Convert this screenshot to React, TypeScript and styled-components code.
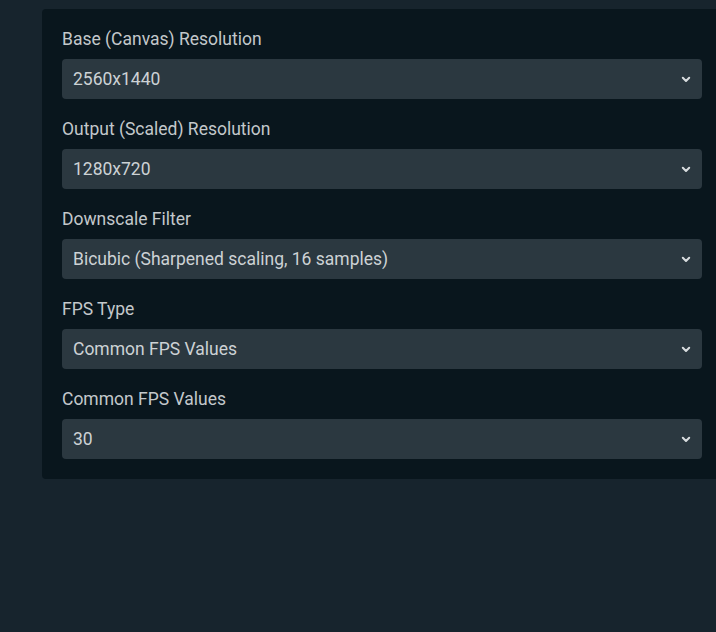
import React from "react";
import styled, { createGlobalStyle } from "styled-components";

const GlobalStyle = createGlobalStyle`
  html, body {
    margin: 0;
    padding: 0;
    background: #17242d;
    overflow: hidden;
  }
  body {
    font-family: Roboto, "Liberation Sans", sans-serif;
  }
`;

const Page = styled.div`
  width: 716px;
  height: 632px;
  padding: 9px 0 0 42px;
  box-sizing: border-box;
  overflow: hidden;
`;

const Panel = styled.div`
  width: 680px;
  box-sizing: border-box;
  background: #09161d;
  border-radius: 4px;
  padding: 20px;
  display: flex;
  flex-direction: column;
  gap: 20px;
`;

const Field = styled.div`
  display: flex;
  flex-direction: column;
`;

const Label = styled.div`
  font-size: 17.5px;
  line-height: 20px;
  color: #c3c8cb;
  margin-bottom: 10px;
`;

const Select = styled.div`
  height: 40px;
  box-sizing: border-box;
  background: #2b3840;
  border-radius: 4px;
  display: flex;
  align-items: center;
  justify-content: space-between;
  padding: 0 10px 0 11px;
  font-size: 17.5px;
  color: #cdd2d5;
`;

const Chevron = () => (
  <svg width="12" height="12" viewBox="0 0 12 12">
    <path d="M2.8 4.8 L6 8 L9.2 4.8" fill="none" stroke="#d8dcde" strokeWidth="2" strokeLinecap="round" strokeLinejoin="round" />
  </svg>
);

const fields = [
  { label: "Base (Canvas) Resolution", value: "2560x1440" },
  { label: "Output (Scaled) Resolution", value: "1280x720" },
  { label: "Downscale Filter", value: "Bicubic (Sharpened scaling, 16 samples)" },
  { label: "FPS Type", value: "Common FPS Values" },
  { label: "Common FPS Values", value: "30" },
];

const App: React.FC = () => {
  return (
    <>
      <GlobalStyle />
      <Page>
        <Panel>
          {fields.map((f) => (
            <Field key={f.label}>
              <Label>{f.label}</Label>
              <Select>
                <span>{f.value}</span>
                <Chevron />
              </Select>
            </Field>
          ))}
        </Panel>
      </Page>
    </>
  );
};

export default App;
